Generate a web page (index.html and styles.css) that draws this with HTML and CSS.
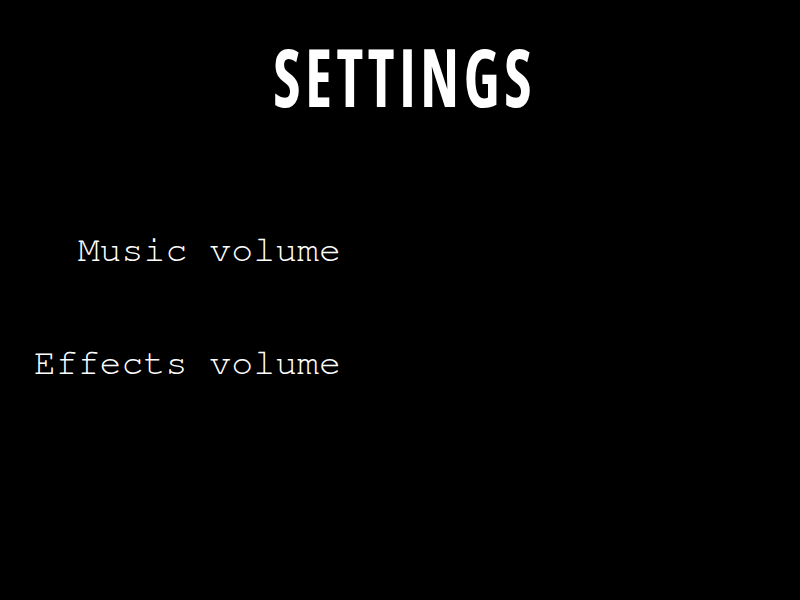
FILE: index.html
```html
<!DOCTYPE html>
<html lang="en">
<head>
<meta charset="utf-8">
<title>Settings</title>
<link rel="stylesheet" href="styles.css">
</head>
<body>
<main class="screen">
  <h1 class="title"><span class="title-text">SETTINGS</span></h1>
  <div class="settings">
    <div class="row"><span class="label">Music volume</span></div>
    <div class="row"><span class="label">Effects volume</span></div>
  </div>
</main>
</body>
</html>
```

FILE: styles.css
```css
html, body {
  margin: 0;
  padding: 0;
  background: #000;
}
.screen {
  width: 800px;
  height: 600px;
  background: #000;
  color: #fff;
  display: flex;
  flex-direction: column;
}
.title {
  margin: 36px 0 0;
  padding-left: 10px;
  text-align: center;
  font-family: "Open Sans", "DejaVu Sans", sans-serif;
  font-stretch: 75%;
  font-weight: 700;
  font-size: 81px;
  line-height: 80px;
  letter-spacing: 6px;
}
.title-text {
  display: inline-block;
  transform: scaleX(0.77);
}
.settings {
  display: flex;
  flex-direction: column;
  padding-top: 114px;
}
.row {
  display: flex;
  height: 113px;
}
.label {
  width: 341px;
  text-align: right;
  font-family: "FreeMono", "Courier New", "Liberation Mono", monospace;
  font-size: 36.6px;
  line-height: 40px;
  color: #fff;
}
```
